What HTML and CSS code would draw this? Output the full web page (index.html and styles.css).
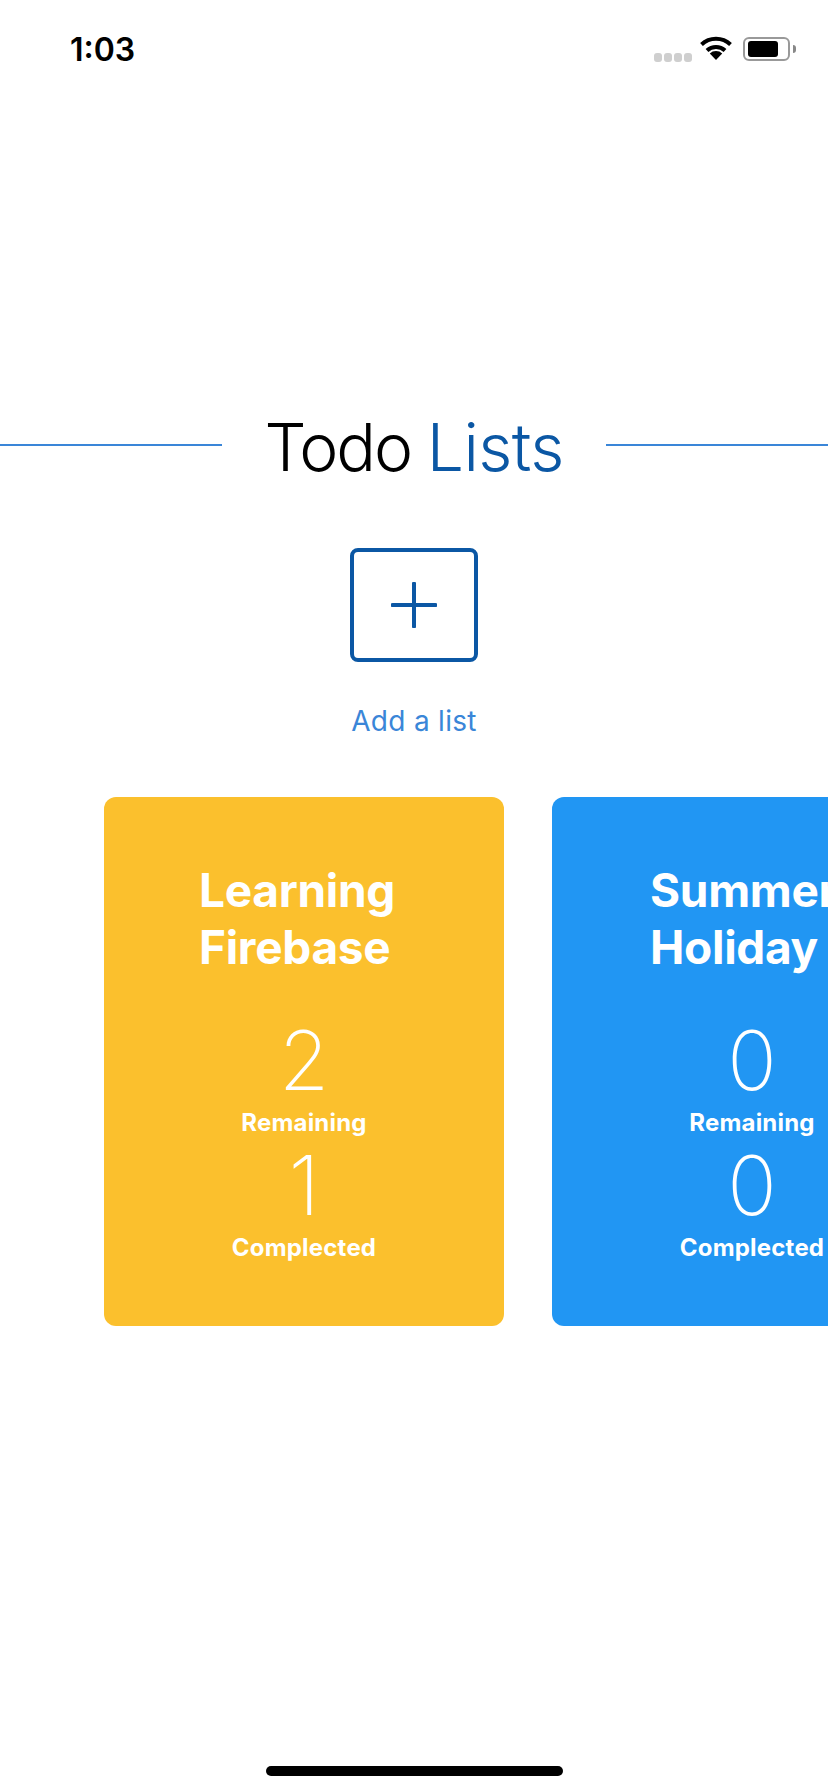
FILE: index.html
```html
<!DOCTYPE html>
<html>
<head>
<meta charset="utf-8">
<meta name="viewport" content="width=device-width, initial-scale=1">
<title>Todo Lists</title>
<link rel="stylesheet" href="styles.css">
</head>
<body>

<div class="screen">

  <div class="status-bar">
    <div class="time">1:03</div>
    <div class="status-icons">
      <div class="signal"><span></span><span></span><span></span><span></span></div>
      <svg class="wifi" width="32" height="24" viewBox="0 0 32 24">
        <path d="M1.5 8.5 A21 21 0 0 1 30.5 8.5" fill="none" stroke="#000" stroke-width="4"/>
        <path d="M7 14.5 A13 13 0 0 1 25 14.5" fill="none" stroke="#000" stroke-width="4"/>
        <path d="M16 24 L9.8 17.6 A9 9 0 0 1 22.2 17.6 Z" fill="#000"/>
      </svg>
      <div class="battery"><div class="battery-level"></div></div>
      <div class="battery-nub"></div>
    </div>
  </div>

  <div class="heading">
    <div class="heading-line"></div>
    <h1 class="heading-text">Todo <span class="heading-blue">Lists</span></h1>
    <div class="heading-line"></div>
  </div>

  <div class="add-list">
    <button class="add-btn">
      <svg width="46" height="46" viewBox="0 0 46 46">
        <path d="M23 1.5 V44.5 M1.5 23 H44.5" fill="none" stroke="#0b57a4" stroke-width="4" stroke-linecap="round"/>
      </svg>
    </button>
    <div class="add-label">Add a list</div>
  </div>

  <div class="lists">
    <div class="card card-yellow">
      <div class="card-title">Learning<br>Firebase</div>
      <div class="count">2</div>
      <div class="count-label">Remaining</div>
      <div class="count">1</div>
      <div class="count-label">Complected</div>
    </div>
    <div class="card card-blue">
      <div class="card-title">Summer<br>Holiday</div>
      <div class="count">0</div>
      <div class="count-label">Remaining</div>
      <div class="count">0</div>
      <div class="count-label">Complected</div>
    </div>
  </div>

  <div class="home-bar"></div>

</div>

</body>
</html>
```

FILE: styles.css
```css
* {
  box-sizing: border-box;
}

body {
  margin: 0;
  background-color: #fff;
  font-family: Inter, "Liberation Sans", sans-serif;
}

.screen {
  width: 828px;
  height: 1792px;
  overflow: hidden;
  display: flex;
  flex-direction: column;
}

/* status bar */
.status-bar {
  height: 72px;
  padding: 32px 32px 0 70px;
  display: flex;
  justify-content: space-between;
  align-items: flex-start;
}

.time {
  font-size: 32px;
  line-height: 36px;
  font-weight: 600;
  color: #000;
}

.status-icons {
  display: flex;
  align-items: flex-start;
  padding-top: 4px;
}

.signal {
  display: flex;
  gap: 2px;
  margin-top: 17px;
  margin-right: 8px;
}

.signal span {
  width: 8px;
  height: 9px;
  border-radius: 3px;
  background-color: #cfcfcf;
}

.wifi {
  margin-right: 11px;
}

.battery {
  width: 47px;
  height: 24px;
  padding: 2px 3px;
  border: 2px solid #999;
  border-radius: 6px;
  margin-top: 1px;
}

.battery-level {
  width: 30px;
  height: 100%;
  background-color: #000;
  border-radius: 3px;
}

.battery-nub {
  width: 3px;
  height: 8px;
  margin-top: 9px;
  margin-left: 3px;
  background-color: #888;
  border-radius: 0 3px 3px 0;
}

/* heading */
.heading {
  margin-top: 335px;
  display: flex;
  align-items: center;
}

.heading-line {
  flex: 1;
  height: 2px;
  margin-bottom: 5px;
  background-color: #3a86d8;
}

.heading-text {
  margin: 0 42px;
  font-size: 66px;
  line-height: 80px;
  font-weight: 350;
  letter-spacing: -2px;
  word-spacing: -1px;
  color: #000;
  white-space: nowrap;
}

.heading-blue {
  letter-spacing: -0.6px;
  color: #0b57a4;
}

/* add button */
.add-list {
  margin-top: 61px;
  display: flex;
  flex-direction: column;
  align-items: center;
}

.add-btn {
  width: 128px;
  height: 114px;
  padding: 0;
  background: none;
  border: 4px solid #0b57a4;
  border-radius: 8px;
  display: flex;
  align-items: center;
  justify-content: center;
}

.add-label {
  margin-top: 42px;
  font-size: 28px;
  line-height: 34px;
  letter-spacing: 0.3px;
  color: #3a86d8;
}

/* cards */
.lists {
  margin-top: 59px;
  padding-left: 104px;
  display: flex;
  gap: 48px;
}

.card {
  flex: none;
  width: 400px;
  height: 529px;
  padding-top: 65px;
  border-radius: 12px;
  color: #fff;
  display: flex;
  flex-direction: column;
  align-items: center;
  text-align: center;
}

.card-yellow {
  background-color: #fbc02d;
}

.card-blue {
  background-color: #2196f3;
}

.card-title {
  align-self: flex-start;
  font-size: 46px;
  line-height: 57px;
  font-weight: 700;
  letter-spacing: -0.3px;
  text-align: left;
  margin-bottom: 40px;
}

.card-yellow .card-title {
  margin-left: 95px;
}

.card-blue .card-title {
  margin-left: 98px;
}

.count {
  font-size: 82px;
  line-height: 89px;
  font-weight: 200;
}

.count-label {
  font-size: 24px;
  line-height: 36px;
  font-weight: 700;
  letter-spacing: 0.2px;
}

.home-bar {
  margin-top: auto;
  margin-bottom: 16px;
  align-self: center;
  width: 297px;
  height: 10px;
  border-radius: 5px;
  background-color: #000;
}
```
